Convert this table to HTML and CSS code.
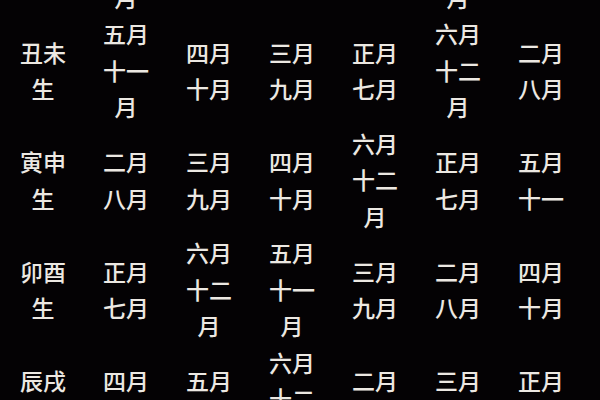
FILE: index.html
```html
<!DOCTYPE html>
<html lang="zh">
<head>
<meta charset="utf-8">
<link rel="stylesheet" href="styles.css">
</head>
<body>
<div class="viewport">
  <div class="table">
    <div class="cell"><span>子午生</span></div>
    <div class="cell"><span>六月十二月</span></div>
    <div class="cell"><span>正月七月</span></div>
    <div class="cell"><span>二月八月</span></div>
    <div class="cell"><span>三月九月</span></div>
    <div class="cell"><span>五月十一月</span></div>
    <div class="cell"><span>四月十月</span></div>

    <div class="cell"><span>丑未生</span></div>
    <div class="cell"><span>五月十一月</span></div>
    <div class="cell"><span>四月十月</span></div>
    <div class="cell"><span>三月九月</span></div>
    <div class="cell"><span>正月七月</span></div>
    <div class="cell"><span>六月十二月</span></div>
    <div class="cell"><span>二月八月</span></div>

    <div class="cell"><span>寅申生</span></div>
    <div class="cell"><span>二月八月</span></div>
    <div class="cell"><span>三月九月</span></div>
    <div class="cell"><span>四月十月</span></div>
    <div class="cell"><span>六月十二月</span></div>
    <div class="cell"><span>正月七月</span></div>
    <div class="cell"><span>五月十一</span></div>

    <div class="cell"><span>卯酉生</span></div>
    <div class="cell"><span>正月七月</span></div>
    <div class="cell"><span>六月十二月</span></div>
    <div class="cell"><span>五月十一月</span></div>
    <div class="cell"><span>三月九月</span></div>
    <div class="cell"><span>二月八月</span></div>
    <div class="cell"><span>四月十月</span></div>

    <div class="cell"><span>辰戌生</span></div>
    <div class="cell"><span>四月十月</span></div>
    <div class="cell"><span>五月十一</span></div>
    <div class="cell"><span>六月十二月</span></div>
    <div class="cell"><span>二月八月</span></div>
    <div class="cell"><span>三月九月</span></div>
    <div class="cell"><span>正月七月</span></div>
  </div>
</div>
</body>
</html>
```

FILE: styles.css
```css
html, body {
  margin: 0;
  padding: 0;
  background: #040204;
}

.viewport {
  width: 600px;
  height: 400px;
  overflow: hidden;
  background: #040204;
}

.table {
  display: grid;
  grid-template-columns: repeat(7, 83px);
  grid-auto-rows: 109.5px;
  margin-top: -94.25px;
  padding-left: 1.5px;
  font-family: "Noto Sans CJK SC", "Noto Sans", sans-serif;
  font-size: 23px;
  font-weight: 500;
  line-height: 36.5px;
  color: #ece8e2;
}

.cell {
  display: flex;
  align-items: center;
  justify-content: center;
  text-align: center;
}

.cell span {
  display: block;
  width: 50px;
}
```
